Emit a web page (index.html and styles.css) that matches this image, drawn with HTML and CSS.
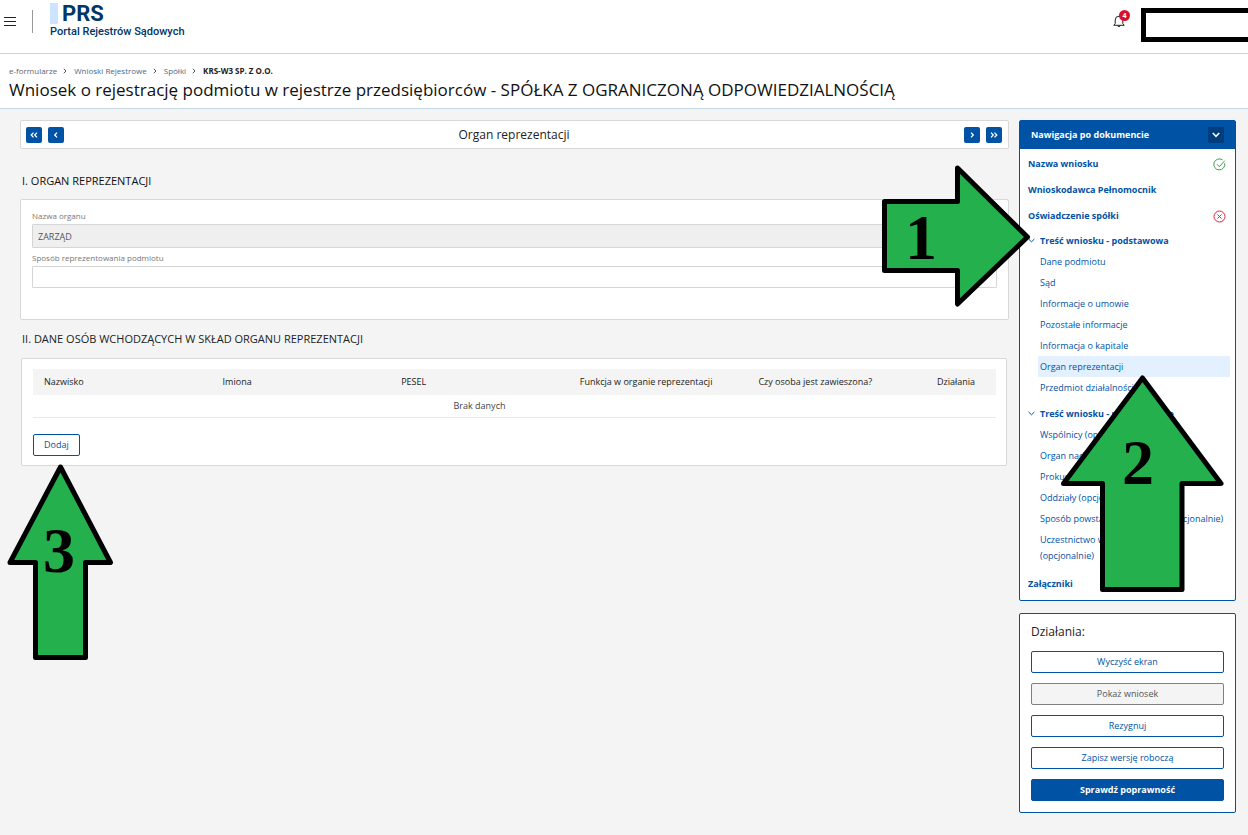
FILE: index.html
```html
<!DOCTYPE html>
<html lang="pl">
<head>
<meta charset="utf-8">
<meta name="viewport" content="width=device-width, initial-scale=1">
<title>PRS – Portal Rejestrów Sądowych</title>
<link rel="stylesheet" href="styles.css">
</head>
<body>
<header class="topbar">
  <button class="menu-btn" type="button" aria-label="Menu">
    <svg width="12" height="9" viewBox="0 0 12 9"><path d="M0 .5h12M0 4.500h12M0 8.500h12" stroke="#222" stroke-width="1"/></svg>
  </button>
  <span class="divider"></span>
  <a class="brand" href="#">
    <span class="brand-top"><span class="brand-mark"></span><span class="brand-name">PRS</span></span>
    <span class="brand-sub">Portal Rejestrów Sądowych</span>
  </a>
  <button class="bell" type="button" aria-label="Powiadomienia">
    <svg width="12" height="13" viewBox="0 0 12 13" fill="none" stroke="#222" stroke-width="1"><path d="M.8 10.3h10.4L9.8 8.5V5A3.8 3.8 0 0 0 2.2 5v3.500z" stroke-linejoin="round"/><path d="M4.600 10.700a1.500 1.500 0 0 0 2.800 0"/></svg>
    <span class="badge">4</span>
  </button>
  <div class="user-box"></div>
</header>

<section class="page-head">
  <nav class="crumbs" aria-label="Ścieżka">
    <a href="#">e-formularze</a><svg class="crumb-sep" viewBox="0 0 4 6"><path d="M.8.8 3 3 .8 5.200"/></svg>
    <a href="#">Wnioski Rejestrowe</a><svg class="crumb-sep" viewBox="0 0 4 6"><path d="M.8.8 3 3 .8 5.200"/></svg>
    <a href="#">Spółki</a><svg class="crumb-sep" viewBox="0 0 4 6"><path d="M.8.8 3 3 .8 5.200"/></svg>
    <b>KRS-W3 SP. Z O.O.</b>
  </nav>
  <h1 class="title">Wniosek o rejestrację podmiotu w rejestrze przedsiębiorców - SPÓŁKA Z OGRANICZONĄ ODPOWIEDZIALNOŚCIĄ</h1>
</section>

<div class="layout">
  <main class="main">
    <div class="pager">
      <div class="pager-group">
        <button class="step" type="button" aria-label="Pierwszy"><svg viewBox="0 0 8 6"><path d="M3.500.6 1.200 3l2.300 2.400M7 .6 4.700 3 7 5.400"/></svg></button>
        <button class="step" type="button" aria-label="Poprzedni"><svg viewBox="0 0 8 6"><path d="M5 .6 2.700 3 5 5.400"/></svg></button>
      </div>
      <h2 class="pager-title">Organ reprezentacji</h2>
      <div class="pager-group">
        <button class="step" type="button" aria-label="Następny"><svg viewBox="0 0 8 6"><path d="M3 .6 5.300 3 3 5.400"/></svg></button>
        <button class="step" type="button" aria-label="Ostatni"><svg viewBox="0 0 8 6"><path d="M1 .6 3.300 3 1 5.400M4.500.6 6.800 3 4.500 5.400"/></svg></button>
      </div>
    </div>

    <h3 class="section-title section-title-first">I. ORGAN REPREZENTACJI</h3>
    <div class="card form-card">
      <label class="label" for="organ">Nazwa organu</label>
      <input class="field" id="organ" type="text" value="ZARZĄD" disabled>
      <label class="label" for="sposob">Sposób reprezentowania podmiotu</label>
      <input class="field" id="sposob" type="text">
    </div>

    <h3 class="section-title">II. DANE OSÓB WCHODZĄCYCH W SKŁAD ORGANU REPREZENTACJI</h3>
    <div class="card table-card">
      <table class="table">
        <thead><tr><th>Nazwisko</th><th>Imiona</th><th>PESEL</th><th>Funkcja w organie reprezentacji</th><th>Czy osoba jest zawieszona?</th><th class="last">Działania</th></tr></thead>
        <tbody><tr><td colspan="6"><span class="empty">Brak danych</span></td></tr></tbody>
      </table>
      <button class="btn btn-add" type="button">Dodaj</button>
    </div>
  </main>

  <aside class="side">
    <nav class="doc-nav" aria-labelledby="nav-title">
      <div class="doc-nav-head">
        <span id="nav-title">Nawigacja po dokumencie</span>
        <button class="toggle" type="button" aria-label="Zwiń"><svg width="8" height="6" viewBox="0 0 8 6"><path d="M.8 1 4 4.300 7.200 1" fill="none" stroke="#fff" stroke-width="1.500"/></svg></button>
      </div>
      <div class="doc-nav-body">
        <a class="nav-row" href="#">Nazwa wniosku
          <svg class="status" viewBox="0 0 13 13" stroke="#3f9f4a"><path d="M11.700 5.200A5.500 5.500 0 1 1 9.500 1.900M4 6.200l2.300 2.500 5.500-6"/></svg></a>
        <a class="nav-row" href="#">Wnioskodawca Pełnomocnik</a>
        <a class="nav-row" href="#">Oświadczenie spółki
          <svg class="status" viewBox="0 0 13 13" stroke="#e0243a"><circle cx="6.500" cy="6.500" r="5.500"/><path d="M4.500 4.500l4 4M8.500 4.500l-4 4"/></svg></a>
        <a class="nav-group" href="#"><svg class="caret" viewBox="0 0 7 5"><path d="M.6 1 3.500 3.800 6.400 1"/></svg>Treść wniosku - podstawowa</a>
        <ul class="sub">
          <li><a href="#">Dane podmiotu</a></li>
          <li><a href="#">Sąd</a></li>
          <li><a href="#">Informacje o umowie</a></li>
          <li><a href="#">Pozostałe informacje</a></li>
          <li><a href="#">Informacja o kapitale</a></li>
          <li><a class="current" href="#" aria-current="page">Organ reprezentacji</a></li>
          <li><a href="#">Przedmiot działalności</a></li>
        </ul>
        <a class="nav-group" href="#"><svg class="caret" viewBox="0 0 7 5"><path d="M.6 1 3.500 3.800 6.400 1"/></svg>Treść wniosku - uzupełniające</a>
        <ul class="sub">
          <li><a href="#">Wspólnicy (opcjonalnie)</a></li>
          <li><a href="#">Organ nadzoru (opcjonalnie)</a></li>
          <li><a href="#">Prokurenci (opcjonalnie)</a></li>
          <li><a href="#">Oddziały (opcjonalnie)</a></li>
          <li><a href="#">Sposób powstania podmiotów (opcjonalnie)</a></li>
          <li><a href="#">Uczestnictwo w grupie<br>(opcjonalnie)</a></li>
        </ul>
        <a class="nav-row" href="#">Załączniki</a>
      </div>
    </nav>

    <section class="actions">
      <h2 class="actions-title">Działania:</h2>
      <button class="btn" type="button">Wyczyść ekran</button>
      <button class="btn" type="button" disabled>Pokaż wniosek</button>
      <button class="btn" type="button">Rezygnuj</button>
      <button class="btn" type="button">Zapisz wersję roboczą</button>
      <button class="btn btn-primary" type="button">Sprawdź poprawność</button>
    </section>
  </aside>
</div>

<svg class="arrow arrow-one" width="150" height="146" viewBox="0 0 150 146"><path d="M3.500 38.500h73V5l70 69-70 67v-33.500h-73z"/><text x="40" y="96">1</text></svg>
<svg class="arrow arrow-two" width="164" height="218" viewBox="0 0 164 218"><path d="M82.500 4 161 109.500h-39v106H42.500v-106H3.500z"/><text x="78" y="110">2</text></svg>
<svg class="arrow arrow-three" width="108" height="198" viewBox="0 0 108 198"><path d="M54.500 4 104.500 99.500H79.500v95h-50v-95H4z"/><text x="53" y="109">3</text></svg>
</body>
</html>
```
FILE: styles.css
```css
* { box-sizing: border-box; }

body {
  position: relative;
  margin: 0;
  min-height: 100vh;
  background: #f4f4f4;
  color: #222;
  font: 9px/16px "Open Sans", "Noto Sans", sans-serif;
}

h1, h2, h3, ul { margin: 0; padding: 0; font-weight: 400; }
a { color: #0052a5; text-decoration: none; }
button, input { font: inherit; }
button { cursor: pointer; }

/* Top bar */
.topbar {
  display: flex;
  align-items: flex-start;
  height: 54px;
  background: #fff;
  border-bottom: 1px solid #c5d3df;
}
.menu-btn { display: flex; margin: 17px 0 0 4px; padding: 0; border: 0; background: none; }
.divider { width: 1px; height: 23px; margin: 10px 17px 0 16px; background: #999; }
.brand { display: flex; flex-direction: column; margin-top: 3px; color: #003668; font-family: Roboto, sans-serif; }
.brand-top { display: flex; gap: 4px; height: 21px; }
.brand-mark { width: 8px; background: #cce4ff; }
.brand-name { font-size: 22px; line-height: 22px; font-weight: 700; }
.brand-sub { font-size: 11px; line-height: 16px; font-weight: 500; }
.bell { position: relative; display: flex; margin: 15px 16px 0 auto; padding: 0; border: 0; background: none; }
.badge {
  position: absolute;
  left: 6px;
  top: -5px;
  width: 11px;
  height: 11px;
  border-radius: 50%;
  background: #d8112f;
  color: #fff;
  font-size: 7px;
  line-height: 11px;
  font-weight: 700;
  text-align: center;
}
.user-box { width: 107px; height: 34px; margin-top: 8px; border: 5px solid #000; border-right: 0; }

/* Page heading */
.page-head { padding: 10px 9px 6px; background: #fff; border-bottom: 1px solid #c5d9e5; }
.crumbs { display: flex; align-items: center; font-size: 8px; line-height: 14px; }
.crumbs a { color: #4b6a8c; }
.crumbs a:first-child { color: #666; }
.crumb-sep { width: 4px; height: 6px; margin: 0 7px 0 6px; fill: none; stroke: #555; }
.title { color: #111; font-size: 17px; line-height: 24px; }

/* Columns */
.layout { display: grid; grid-template-columns: minmax(0, 1fr) 217px; gap: 10px; align-items: start; padding: 11px 12px 20px 20px; }

.pager {
  display: flex;
  align-items: center;
  justify-content: space-between;
  height: 29px;
  padding: 0 6px 0 5px;
  background: #fff;
  border: 1px solid #d8d8d8;
  border-radius: 2px;
}
.pager-group { display: flex; gap: 6px; }
.pager-title { color: #222; font-size: 12px; }
.step { display: flex; align-items: center; justify-content: center; width: 16px; height: 16px; padding: 0; border: 0; border-radius: 2px; background: #0052a5; }
.step svg { width: 8px; height: 6px; fill: none; stroke: #fff; stroke-width: 1.300; }

.section-title { margin: 11px 2px; font-size: 11px; line-height: 16px; }
.section-title-first { margin-top: 24px; margin-bottom: 10px; color: #111; }

.card { background: #fff; border: 1px solid #d8d8d8; border-radius: 2px; }
.form-card { display: flex; flex-direction: column; padding: 8px 11px 31px; }
.label { color: #777; font-size: 8px; }
.field {
  width: 100%;
  height: 22px;
  padding: 0 5px;
  border: 1px solid #d5d5d5;
  border-radius: 1px;
  background: #fff;
  color: #444;
}
.field:disabled { height: 24px; margin-bottom: 2px; background: #efefef; color: #555; }

.table-card { margin: 0 2px 0 1px; padding: 10px 10px 9px 11px; }
.table { width: 100%; border-collapse: collapse; table-layout: fixed; }
.table th { height: 26px; padding: 0 0 0 11px; background: #f4f4f4; text-align: left; font-weight: 400; white-space: nowrap; }
.table .last { width: 70px; }
.table td { height: 22px; padding: 0; border-bottom: 1px solid #eaeaea; }
.empty { display: block; padding-right: 70px; text-align: center; color: #444; }

.btn {
  display: block;
  height: 22px;
  padding: 0 10px;
  border: 1px solid #0052a5;
  border-radius: 2px;
  background: #fff;
  color: #0052a5;
  line-height: 16px;
}
.btn:disabled { border-color: #808080; background: #f4f4f4; color: #555; }
.btn-primary { background: #0052a5; color: #fff; font-weight: 700; }
.btn-add { margin-top: 16px; }

/* Document navigation */
.side { display: flex; flex-direction: column; gap: 12px; }
.doc-nav, .actions { background: #fff; border: 1px solid #0052a5; border-radius: 2px; }
.doc-nav-head {
  display: flex;
  align-items: center;
  justify-content: space-between;
  height: 28px;
  padding: 0 11px;
  background: #0052a5;
  color: #fff;
  font-weight: 700;
}
.toggle { display: flex; align-items: center; justify-content: center; width: 16px; height: 16px; padding: 0; border: 0; border-radius: 1px; background: #003d7e; }
.doc-nav-body { padding: 2px 5px 3px 8px; }
.nav-row { display: flex; align-items: center; justify-content: space-between; min-height: 26px; padding-right: 4px; font-weight: 700; }
.status { width: 13px; height: 13px; fill: none; stroke-width: 1; }
.nav-group { display: flex; align-items: center; gap: 5px; margin-top: 1px; line-height: 21px; font-weight: 700; }
.caret { width: 7px; height: 5px; fill: none; stroke: #0052a5; }
.sub { margin-bottom: 5px; padding-left: 10px; list-style: none; }
.sub a { display: block; padding: 3px 2px 2px; white-space: nowrap; }
.sub .current { background: #e2f0ff; }

.actions { display: flex; flex-direction: column; gap: 10px; padding: 10px 11px 11px; }
.actions-title { margin-bottom: 1px; font-size: 12px; }

/* Numbered step arrows laid over the form */
.arrow { position: absolute; fill: #24b14d; stroke: #000; stroke-width: 5; stroke-linejoin: round; }
.arrow text { fill: #000; stroke: none; font: 700 64px "Liberation Serif", serif; text-anchor: middle; }
.arrow-one { right: 217px; top: 163px; }
.arrow-two { right: 24px; top: 374px; }
.arrow-three { left: 6px; top: 463px; }
```
